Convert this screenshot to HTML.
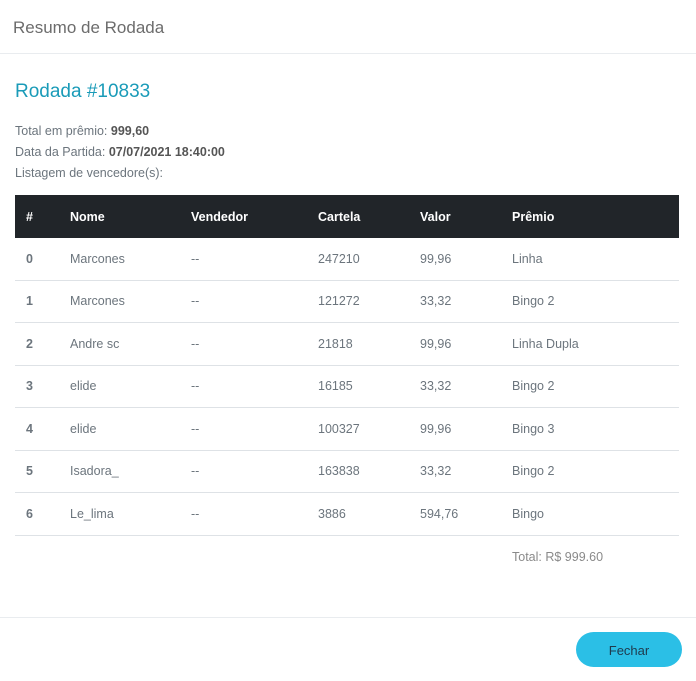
<!DOCTYPE html>
<html><head><meta charset="utf-8"><style>
body{margin:0;background:#fff;font-family:"Liberation Sans",sans-serif;width:696px;height:681px;overflow:hidden;position:relative;color:#6c757d;}
.hdr{position:absolute;left:0;top:0;width:696px;height:53px;border-bottom:1px solid #e9ecef;}
.hdr span{position:absolute;left:13px;top:18px;font-size:17px;color:#6c6c6c;}
h2{position:absolute;left:15px;top:81px;margin:0;font-size:19px;font-weight:normal;color:#1a9bb8;}
.info{position:absolute;left:15px;top:121px;font-size:12.5px;line-height:21px;color:#6c757d;}
.info b{color:#555;}
table{position:absolute;left:15px;top:195px;width:664px;border-collapse:collapse;font-size:12.5px;}
th{background:#212529;color:#fff;text-align:left;height:43px;padding:0;font-size:12.5px;}
td{height:41.5px;border-bottom:1px solid #dee2e6;padding:0;color:#6c757d;}
td:first-child{font-weight:bold;}
.c0{padding-left:11px;width:44px}
.total{position:absolute;left:512px;top:550px;font-size:12.5px;color:#8a8a8a;}
.ftr{position:absolute;left:0;top:617px;width:696px;border-top:1px solid #e9ecef;}
.btn{position:absolute;left:576px;top:632px;width:106px;height:35px;border-radius:18px;background:#2bbfe6;color:#1f3a4d;font-size:13px;text-align:center;line-height:37px;}
</style></head><body>
<div class="hdr"><span>Resumo de Rodada</span></div>
<h2>Rodada #10833</h2>
<div class="info">Total em prêmio: <b>999,60</b><br>Data da Partida: <b>07/07/2021 18:40:00</b><br>Listagem de vencedore(s):</div>
<table>
<colgroup><col style="width:55px"><col style="width:121px"><col style="width:127px"><col style="width:102px"><col style="width:92px"><col></colgroup>
<tr><th class="c0">#</th><th>Nome</th><th>Vendedor</th><th>Cartela</th><th>Valor</th><th>Prêmio</th></tr>
<tr><td class="c0">0</td><td>Marcones</td><td>--</td><td>247210</td><td>99,96</td><td>Linha</td></tr>
<tr><td class="c0">1</td><td>Marcones</td><td>--</td><td>121272</td><td>33,32</td><td>Bingo 2</td></tr>
<tr><td class="c0">2</td><td>Andre sc</td><td>--</td><td>21818</td><td>99,96</td><td>Linha Dupla</td></tr>
<tr><td class="c0">3</td><td>elide</td><td>--</td><td>16185</td><td>33,32</td><td>Bingo 2</td></tr>
<tr><td class="c0">4</td><td>elide</td><td>--</td><td>100327</td><td>99,96</td><td>Bingo 3</td></tr>
<tr><td class="c0">5</td><td>Isadora_</td><td>--</td><td>163838</td><td>33,32</td><td>Bingo 2</td></tr>
<tr><td class="c0">6</td><td>Le_lima</td><td>--</td><td>3886</td><td>594,76</td><td>Bingo</td></tr>
</table>
<div class="total">Total: R$ 999.60</div>
<div class="ftr"></div>
<div class="btn">Fechar</div>
</body></html>
